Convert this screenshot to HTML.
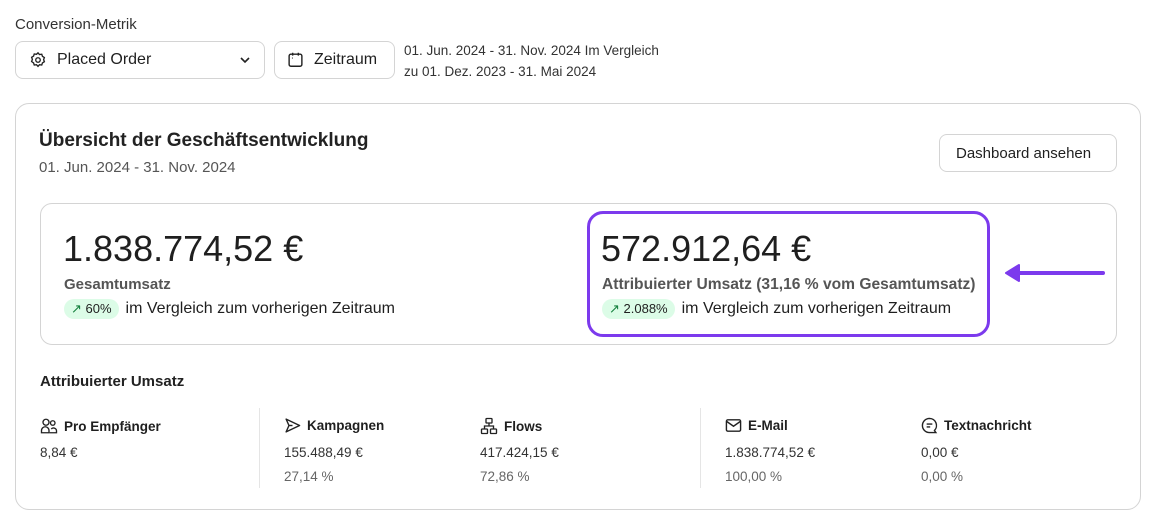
<!DOCTYPE html>
<html><head><meta charset="utf-8"><style>
*{box-sizing:border-box;margin:0;padding:0}
body{width:1157px;height:525px;background:#fff;font-family:"Liberation Sans",sans-serif;color:#1f1f1f;position:relative;overflow:hidden}
.a{position:absolute;white-space:nowrap}
.btn{position:absolute;border:1px solid #d4d4d4;border-radius:8px;background:#fff}
.pill{display:inline-block;background:#dcfce7;border-radius:10px;padding:2px 7px;font-size:13px;color:#1f1f1f;margin-right:7px}
.h{font-size:13.5px;font-weight:bold;display:flex;align-items:center;gap:6px}
.v{font-size:13.5px;color:#333}
.p{font-size:13.5px;color:#666}
</style></head><body>
<div class="a" style="left:15px;top:16px;font-size:15px;color:#333">Conversion-Metrik</div>
<div class="btn" style="left:15px;top:41px;width:250px;height:38px"></div>
<svg class="a" style="left:29px;top:51px" width="18" height="18" viewBox="0 0 24 24" fill="none" stroke="#222" stroke-width="1.8"><path d="M12 2.5l2 2.2 3-.4.9 2.8 2.6 1.6-1 2.8 1 2.8-2.6 1.6-.9 2.8-3-.4-2 2.2-2-2.2-3 .4-.9-2.8L3.5 14l1-2.8-1-2.8 2.6-1.6.9-2.8 3 .4z"/><circle cx="12" cy="12" r="3"/></svg>
<div class="a" style="left:57px;top:51px;font-size:16px">Placed Order</div>
<svg class="a" style="left:239px;top:56px" width="12" height="8" viewBox="0 0 12 8" fill="none" stroke="#222" stroke-width="1.6"><path d="M2 2l4 4 4-4"/></svg>
<div class="btn" style="left:274px;top:41px;width:121px;height:38px"></div>
<svg class="a" style="left:287px;top:51px" width="17" height="17" viewBox="0 0 24 24" fill="none" stroke="#222" stroke-width="2"><rect x="3" y="4.5" width="18" height="17" rx="2.5"/><path d="M8 2.5v4M16 2.5v4M7 10h1"/></svg>
<div class="a" style="left:314px;top:51px;font-size:16px">Zeitraum</div>
<div class="a" style="left:404px;top:40px;font-size:13.5px;color:#333;line-height:21px">01. Jun. 2024 - 31. Nov. 2024 Im Vergleich<br>zu 01. Dez. 2023 - 31. Mai 2024</div>

<div class="a" style="left:15px;top:103px;width:1126px;height:407px;border:1px solid #d4d4d4;border-radius:14px"></div>
<div class="a" style="left:39px;top:130px;font-size:19px;font-weight:bold;color:#222">Übersicht der Geschäftsentwicklung</div>
<div class="a" style="left:39px;top:159px;font-size:15px;color:#555">01. Jun. 2024 - 31. Nov. 2024</div>
<div class="btn" style="left:939px;top:134px;width:178px;height:38px"></div>
<div class="a" style="left:956px;top:145px;font-size:15px">Dashboard ansehen</div>

<div class="a" style="left:40px;top:203px;width:1077px;height:142px;border:1px solid #d4d4d4;border-radius:12px"></div>
<div class="a" style="left:63px;top:228px;font-size:36px">1.838.774,52 €</div>
<div class="a" style="left:64px;top:276px;font-size:15px;font-weight:bold;color:#555">Gesamtumsatz</div>
<div class="a" style="left:64px;top:299px;font-size:16px"><span class="pill"><span style="color:#15803d">↗</span> 60%</span>im Vergleich zum vorherigen Zeitraum</div>

<div class="a" style="left:587px;top:211px;width:403px;height:126px;border:3px solid #7c3aed;border-radius:16px"></div>
<div class="a" style="left:601px;top:228px;font-size:36px">572.912,64 €</div>
<div class="a" style="left:602px;top:276px;font-size:15.6px;font-weight:bold;color:#555">Attribuierter Umsatz (31,16 % vom Gesamtumsatz)</div>
<div class="a" style="left:602px;top:299px;font-size:16px"><span class="pill"><span style="color:#15803d">↗</span> 2.088%</span>im Vergleich zum vorherigen Zeitraum</div>
<svg class="a" style="left:1003px;top:260px" width="104" height="26" viewBox="0 0 104 26"><path d="M14 13H100" stroke="#7c3aed" stroke-width="4" stroke-linecap="round"/><path d="M3 13L16 5V21Z" fill="#7c3aed" stroke="#7c3aed" stroke-width="2" stroke-linejoin="round"/></svg>

<div class="a" style="left:40px;top:373px;font-size:15px;font-weight:bold;color:#222">Attribuierter Umsatz</div>
<div class="a" style="left:259px;top:408px;width:1px;height:80px;background:#e5e5e5"></div>
<div class="a" style="left:700px;top:408px;width:1px;height:80px;background:#e5e5e5"></div>

<div class="a h" style="left:40px;top:417px"><svg width="18" height="18" viewBox="0 0 24 24" fill="none" stroke="#222" stroke-width="1.8"><circle cx="8" cy="7" r="4"/><circle cx="17" cy="8" r="3"/><path d="M2 21v-3a5 5 0 0110 0v3zM13 21h9v-2a4 4 0 00-7-3"/></svg>Pro Empfänger</div>
<div class="a v" style="left:40px;top:445px">8,84 €</div>

<div class="a h" style="left:284px;top:417px"><svg width="17" height="17" viewBox="0 0 24 24" fill="none" stroke="#222" stroke-width="2" stroke-linejoin="round"><path d="M3 3l19 9-19 9 4-9z"/><path d="M7 12h5"/></svg>Kampagnen</div>
<div class="a v" style="left:284px;top:445px">155.488,49 €</div>
<div class="a p" style="left:284px;top:469px">27,14 %</div>

<div class="a h" style="left:480px;top:417px"><svg width="18" height="18" viewBox="0 0 24 24" fill="none" stroke="#222" stroke-width="1.8"><rect x="8" y="2" width="8" height="6" rx="1"/><rect x="2" y="16" width="8" height="6" rx="1"/><rect x="14" y="16" width="8" height="6" rx="1"/><path d="M12 8v4M6 16v-4h12v4"/></svg>Flows</div>
<div class="a v" style="left:480px;top:445px">417.424,15 €</div>
<div class="a p" style="left:480px;top:469px">72,86 %</div>

<div class="a h" style="left:725px;top:417px"><svg width="17" height="17" viewBox="0 0 24 24" fill="none" stroke="#222" stroke-width="2"><rect x="2" y="4" width="20" height="16" rx="2"/><path d="M2 6l10 7 10-7"/></svg>E-Mail</div>
<div class="a v" style="left:725px;top:445px">1.838.774,52 €</div>
<div class="a p" style="left:725px;top:469px">100,00 %</div>

<div class="a h" style="left:921px;top:417px"><svg width="17" height="17" viewBox="0 0 24 24" fill="none" stroke="#222" stroke-width="2"><path d="M12 2a10 10 0 100 20h9l-2-3a10 10 0 00-7-17z"/><path d="M8 10h8M8 14h5"/></svg>Textnachricht</div>
<div class="a v" style="left:921px;top:445px">0,00 €</div>
<div class="a p" style="left:921px;top:469px">0,00 %</div>
</body></html>
